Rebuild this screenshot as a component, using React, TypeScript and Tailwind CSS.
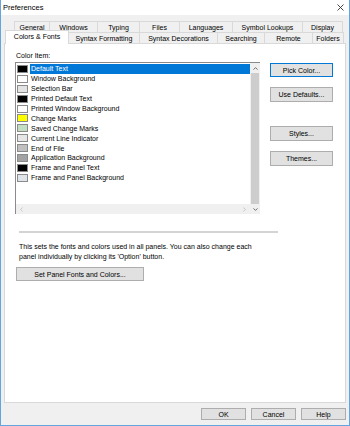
import React from "react";

const row1 = [
  { t: "General", w: 36 },
  { t: "Windows", w: 48 },
  { t: "Typing", w: 42 },
  { t: "Files", w: 40 },
  { t: "Languages", w: 53 },
  { t: "Symbol Lookups", w: 70 },
  { t: "Display", w: 40 },
];

const row2 = [
  { t: "Syntax Formatting", w: 71 },
  { t: "Syntax Decorations", w: 78 },
  { t: "Searching", w: 47 },
  { t: "Remote", w: 48 },
  { t: "Folders", w: 31 },
];

const items = [
  { t: "Default Text", c: "#000000" },
  { t: "Window Background", c: "#ffffff" },
  { t: "Selection Bar", c: "#e3e3e3" },
  { t: "Printed Default Text", c: "#000000" },
  { t: "Printed Window Background", c: "#ffffff" },
  { t: "Change Marks", c: "#ffff00" },
  { t: "Saved Change Marks", c: "#c3dfc3" },
  { t: "Current Line Indicator", c: "#e6e6e6" },
  { t: "End of File", c: "#c0c0c0" },
  { t: "Application Background", c: "#a3a3a3" },
  { t: "Frame and Panel Text", c: "#000000" },
  { t: "Frame and Panel Background", c: "#dfe3ea" },
];

function Btn({ label, cls }: { label: string; cls: string }) {
  return (
    <div
      className={
        "flex items-center justify-center bg-[#e1e1e1] border text-black " + cls
      }
    >
      {label}
    </div>
  );
}

export default function App() {
  return (
    <div
      className="w-[350px] h-[426px] bg-[#f0f0f0] border-x border-b border-[#64a5df] flex flex-col text-[7px] leading-[9px] text-black"
      style={{ fontFamily: '"Liberation Sans", Arial, sans-serif' }}
    >
      {/* title bar */}
      <div className="h-[15px] bg-white flex items-center justify-between pl-[2px] pr-[5px] shrink-0">
        <span className="text-[7.5px]">Preferences</span>
        <svg width="7" height="7" viewBox="0 0 7 7">
          <path d="M0.5 0.5 L6.5 6.5 M6.5 0.5 L0.5 6.5" stroke="#333" strokeWidth="0.9" />
        </svg>
      </div>

      {/* tabs */}
      <div className="mt-[6px] shrink-0">
        <div className="flex ml-[13px] h-[11px]">
          {row1.map((r, i) => (
            <div
              key={r.t}
              className={
                "h-[11px] flex items-center justify-center bg-[#f0f0f0] border-t border-r border-[#d9d9d9] " +
                (i === 0 ? "border-l" : "")
              }
              style={{ width: r.w }}
            >
              {r.t}
            </div>
          ))}
        </div>
        <div className="flex ml-[4px] h-[11px] items-end">
          <div className="relative z-10 w-[64px] h-[14px] -mb-[1px] bg-white border-t border-x border-[#d9d9d9] flex items-center justify-center pb-[2px]">
            Colors &amp; Fonts
          </div>
          {row2.map((r) => (
            <div
              key={r.t}
              className="h-[11px] flex items-center justify-center bg-[#f0f0f0] border-t border-r border-[#d9d9d9]"
              style={{ width: r.w }}
            >
              {r.t}
            </div>
          ))}
        </div>
      </div>

      {/* panel */}
      <div className="mx-[3px] h-[360px] bg-white border border-[#d9d9d9] flex flex-col pt-[7px] pl-[10px] shrink-0">
        <div className="ml-[1px] h-[9px]">Color Item:</div>
        <div className="flex mt-[2px]">
          {/* list box */}
          <div className="w-[245px] h-[152px] border-l border-t border-[#8a8a8a] flex flex-col bg-white">
            <div className="flex flex-1">
              <div className="flex-1 pt-[1px]">
                {items.map((it, i) => (
                  <div key={it.t} className="h-[9.9px] flex items-center">
                    <div
                      className="ml-[1px] w-[11px] h-[8px] border border-[#8a8a8a] shrink-0"
                      style={{ background: it.c }}
                    />
                    <div
                      className={
                        "ml-[2px] flex-1 h-full flex items-center pl-[1px] " +
                        (i === 0 ? "bg-[#0078d7] text-white" : "")
                      }
                    >
                      {it.t}
                    </div>
                  </div>
                ))}
              </div>
              {/* vertical scrollbar */}
              <div className="w-[10px] flex flex-col bg-[#f0f0f0]">
                <div className="h-[10px] flex items-center justify-center">
                  <svg width="5" height="3" viewBox="0 0 5 3">
                    <path d="M0.5 2.6 L2.5 0.6 L4.5 2.6" stroke="#606060" strokeWidth="0.9" fill="none" />
                  </svg>
                </div>
                <div className="flex-1 mx-[1px] bg-[#cdcdcd]" />
              </div>
            </div>
            {/* horizontal scrollbar */}
            <div className="h-[10px] flex bg-[#f0f0f0]">
              <div className="flex-1 flex items-center justify-between px-[4px]">
                <svg width="3" height="5" viewBox="0 0 3 5">
                  <path d="M2.6 0.5 L0.6 2.5 L2.6 4.5" stroke="#bdbdbd" strokeWidth="0.8" fill="none" />
                </svg>
                <svg width="3" height="5" viewBox="0 0 3 5">
                  <path d="M0.4 0.5 L2.4 2.5 L0.4 4.5" stroke="#bdbdbd" strokeWidth="0.8" fill="none" />
                </svg>
              </div>
              <div className="w-[10px] flex items-center justify-center">
                <svg width="5" height="3" viewBox="0 0 5 3">
                  <path d="M0.5 0.4 L2.5 2.4 L4.5 0.4" stroke="#606060" strokeWidth="0.9" fill="none" />
                </svg>
              </div>
            </div>
          </div>
          {/* right buttons */}
          <div className="ml-[10px] flex flex-col w-[63px]">
            <Btn label="Pick Color..." cls="h-[14px] mt-[1px] border-[#0078d7]" />
            <Btn label="Use Defaults..." cls="h-[15px] mt-[10px] border-[#adadad]" />
            <Btn label="Styles..." cls="h-[15px] mt-[24px] border-[#adadad]" />
            <Btn label="Themes..." cls="h-[15px] mt-[10px] border-[#adadad]" />
          </div>
        </div>
        <div className="ml-[4px] mt-[17px] w-[259px] h-[2px] bg-[#d4d4d4]" />
        <div className="ml-[4px] mt-[9px] leading-[10px]">
          <div>This sets the fonts and colors used in all panels. You can also change each</div>
          <div>panel individually by clicking its 'Option' button.</div>
        </div>
        <Btn label="Set Panel Fonts and Colors..." cls="ml-[1px] mt-[5px] w-[128px] h-[14px] border-[#adadad]" />
      </div>

      {/* bottom buttons */}
      <div className="flex justify-end gap-[5px] pr-[3px] mt-[5px]">
        <Btn label="OK" cls="w-[45px] h-[12px] border-[#adadad]" />
        <Btn label="Cancel" cls="w-[45px] h-[12px] border-[#adadad]" />
        <Btn label="Help" cls="w-[45px] h-[12px] border-[#adadad]" />
      </div>
    </div>
  );
}
